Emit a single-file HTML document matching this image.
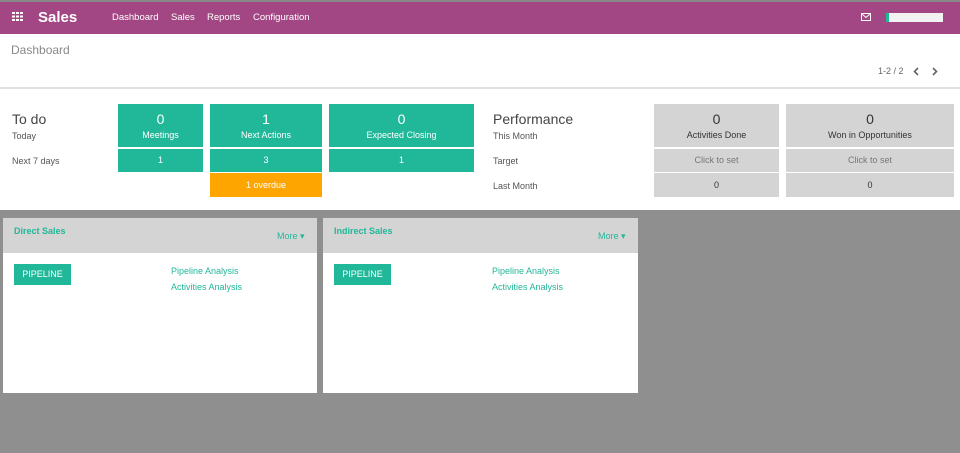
<!DOCTYPE html><html><head><style>
*{margin:0;padding:0;box-sizing:border-box}
body{width:960px;height:453px;overflow:hidden;background:#8f8f8f;font-family:"Liberation Sans",sans-serif;position:relative}
.a{position:absolute}
.nav{left:0;top:0;width:960px;height:34px;background:#a24783;border-top:2px solid #888;box-shadow:0 1px 2px #777}
.w{color:#fff}
.g{background:#21b799;color:#fff;text-align:center}
.p{background:#d4d4d4;color:#333;text-align:center}
.c{font-size:9px}
.gr{color:#21b799}
</style></head><body>
<div class="a nav"></div>
<svg class="a" style="left:12px;top:12px" width="11" height="9"><g fill="#fff"><rect x="0" y="0" width="3" height="2"/><rect x="4" y="0" width="3" height="2"/><rect x="8" y="0" width="3" height="2"/><rect x="0" y="3.5" width="3" height="2"/><rect x="4" y="3.5" width="3" height="2"/><rect x="8" y="3.5" width="3" height="2"/><rect x="0" y="7" width="3" height="2"/><rect x="4" y="7" width="3" height="2"/><rect x="8" y="7" width="3" height="2"/></g></svg>
<div class="a w" style="left:38px;top:9px;font-size:15px;font-weight:bold">Sales</div>
<div class="a w" style="left:112px;top:12px;font-size:9.5px">Dashboard</div>
<div class="a w" style="left:171px;top:12px;font-size:9.5px">Sales</div>
<div class="a w" style="left:207px;top:12px;font-size:9.5px">Reports</div>
<div class="a w" style="left:253px;top:12px;font-size:9.5px">Configuration</div>
<svg class="a" style="left:861px;top:13px" width="10" height="8"><rect x="0.5" y="0.5" width="9" height="7" fill="none" stroke="#fff"/><path d="M1 1L5 4.5L9 1" fill="none" stroke="#fff"/></svg>
<div class="a" style="left:886px;top:13px;width:57px;height:9px;background:#f2f2f2;border-left:3px solid #21b799"></div>
<div class="a" style="left:0;top:34px;width:960px;height:55px;background:#fff;border-bottom:2px solid #e0e0e0"></div>
<div class="a" style="left:11px;top:43px;font-size:12px;color:#888">Dashboard</div>
<div class="a" style="left:878px;top:66px;font-size:9px;color:#666">1-2 / 2</div>
<svg class="a" style="left:912px;top:67px" width="30" height="9"><path d="M6 1L2.5 4.5L6 8M21 1L24.5 4.5L21 8" fill="none" stroke="#666" stroke-width="1.6"/></svg>
<div class="a" style="left:0;top:89px;width:960px;height:121px;background:#fff"></div>
<div class="a" style="left:12px;top:111px;font-size:14px;color:#444">To do</div>
<div class="a c" style="left:12px;top:131px;color:#555">Today</div>
<div class="a c" style="left:12px;top:156px;color:#555">Next 7 days</div>
<div class="a g" style="left:118px;top:104px;width:85px;height:43px"><div style="font-size:14px;padding-top:7px">0</div><div class="c" style="padding-top:3px">Meetings</div></div>
<div class="a g c" style="left:118px;top:149px;width:85px;height:23px;line-height:23px">1</div>
<div class="a g" style="left:210px;top:104px;width:112px;height:43px"><div style="font-size:14px;padding-top:7px">1</div><div class="c" style="padding-top:3px">Next Actions</div></div>
<div class="a g c" style="left:210px;top:149px;width:112px;height:23px;line-height:23px">3</div>
<div class="a c" style="left:210px;top:173px;width:112px;height:24px;line-height:24px;background:#ffa500;color:#fff;text-align:center">1 overdue</div>
<div class="a g" style="left:329px;top:104px;width:145px;height:43px"><div style="font-size:14px;padding-top:7px">0</div><div class="c" style="padding-top:3px">Expected Closing</div></div>
<div class="a g c" style="left:329px;top:149px;width:145px;height:23px;line-height:23px">1</div>
<div class="a" style="left:493px;top:111px;font-size:14px;color:#444">Performance</div>
<div class="a c" style="left:493px;top:131px;color:#555">This Month</div>
<div class="a c" style="left:493px;top:156px;color:#555">Target</div>
<div class="a c" style="left:493px;top:181px;color:#555">Last Month</div>
<div class="a p" style="left:654px;top:104px;width:125px;height:43px"><div style="font-size:14px;padding-top:7px">0</div><div class="c" style="padding-top:3px">Activities Done</div></div>
<div class="a p c" style="left:654px;top:149px;width:125px;height:23px;line-height:23px;color:#777">Click to set</div>
<div class="a p c" style="left:654px;top:173px;width:125px;height:24px;line-height:24px">0</div>
<div class="a p" style="left:786px;top:104px;width:168px;height:43px"><div style="font-size:14px;padding-top:7px">0</div><div class="c" style="padding-top:3px">Won in Opportunities</div></div>
<div class="a p c" style="left:786px;top:149px;width:168px;height:23px;line-height:23px;color:#777">Click to set</div>
<div class="a p c" style="left:786px;top:173px;width:168px;height:24px;line-height:24px">0</div>

<div class="a" style="left:3px;top:218px;width:314px;height:175px;background:#fff"></div>
<div class="a" style="left:3px;top:218px;width:314px;height:35px;background:#d4d4d4"></div>
<div class="a gr c" style="left:14px;top:226px;font-weight:bold">Direct Sales</div>
<div class="a gr c" style="left:277px;top:231px">More ▾</div>
<div class="a g c" style="left:14px;top:264px;width:57px;height:21px;line-height:21px">PIPELINE</div>
<div class="a gr c" style="left:171px;top:266px">Pipeline Analysis</div>
<div class="a gr c" style="left:171px;top:282px">Activities Analysis</div>

<div class="a" style="left:323px;top:218px;width:315px;height:175px;background:#fff"></div>
<div class="a" style="left:323px;top:218px;width:315px;height:35px;background:#d4d4d4"></div>
<div class="a gr c" style="left:334px;top:226px;font-weight:bold">Indirect Sales</div>
<div class="a gr c" style="left:598px;top:231px">More ▾</div>
<div class="a g c" style="left:334px;top:264px;width:57px;height:21px;line-height:21px">PIPELINE</div>
<div class="a gr c" style="left:492px;top:266px">Pipeline Analysis</div>
<div class="a gr c" style="left:492px;top:282px">Activities Analysis</div>
</body></html>
